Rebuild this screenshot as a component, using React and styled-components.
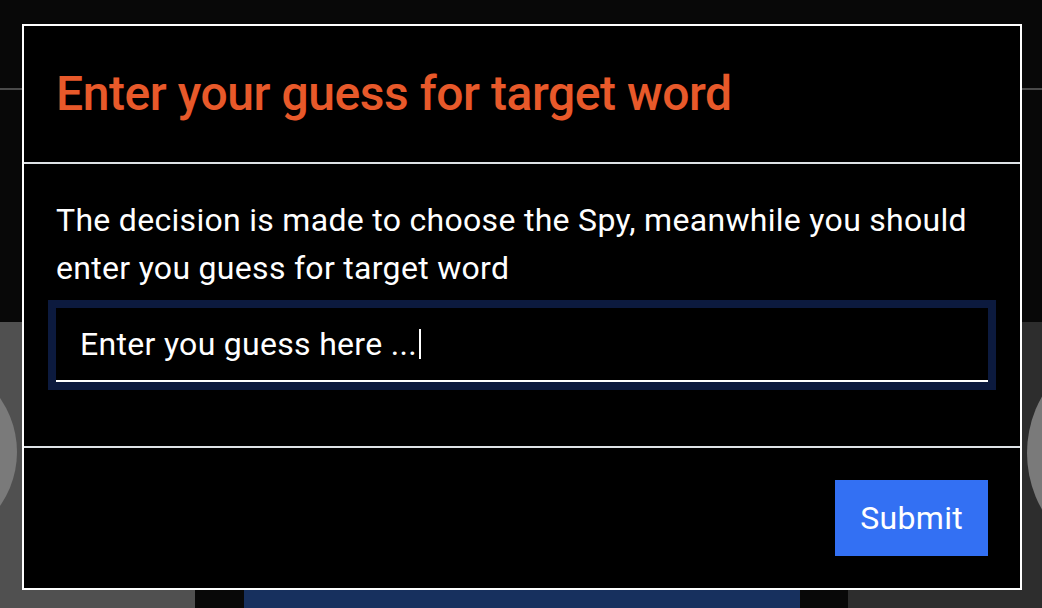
import React from 'react';
import styled, { createGlobalStyle } from 'styled-components';

const GlobalStyle = createGlobalStyle`
  html, body {
    margin: 0;
    padding: 0;
    background: #080808;
    font-family: Roboto, "Noto Sans", "Liberation Sans", sans-serif;
  }
  * { box-sizing: border-box; }
`;

// the game page sitting behind the modal
const Page = styled.div`
  height: 100vh;
  display: flex;
  flex-direction: column;
  overflow: hidden;
`;

const TopBar = styled.div`
  flex: 0 0 90px;
  border-bottom: 2px solid #4a4a4a;
`;

const Stage = styled.div`
  flex: 0 0 232px;
`;

const CardRow = styled.div`
  flex: 1;
  display: flex;
`;

const PlayerCard = styled.div`
  flex: 0 0 ${p => p.width}px;
  background: ${p => p.bg};
  overflow: hidden;
`;

const Avatar = styled.div`
  width: ${p => p.size}px;
  height: ${p => p.size}px;
  border-radius: 50%;
  background: #7a7a7a;
  margin-top: ${p => p.top}px;
  margin-left: ${p => p.left}px;
`;

const Center = styled.div`
  flex: 0 0 556px;
  margin: 0 48px 0 49px;
  display: flex;
  flex-direction: column;
  justify-content: flex-end;
`;

const VoteButton = styled.div`
  height: 60px;
  margin-bottom: -30px;
  background: #17305e;
`;

// modal
const Backdrop = styled.div`
  position: fixed;
  inset: 0;
`;

const Modal = styled.div`
  position: absolute;
  top: 24px;
  left: 22px;
  width: 1000px;
  height: 566px;
  border: 2px solid #fff;
  background: #000;
  display: flex;
  flex-direction: column;
  color: #fff;
`;

const Header = styled.div`
  flex: 0 0 138px;
  padding: 0 32px;
  display: flex;
  align-items: center;
  border-bottom: 2px solid #dee2e6;
`;

const Title = styled.h5`
  margin: 0;
  font-size: 48px;
  font-weight: 500;
  line-height: 1.2;
  letter-spacing: -0.45px;
  color: #e8592a;
`;

const Body = styled.div`
  flex: 1;
  padding: 32px;
`;

const Text = styled.p`
  margin: 0 0 16px;
  font-size: 32px;
  line-height: 48px;
  letter-spacing: 0.3px;
`;

const InputWrap = styled.label`
  display: flex;
  align-items: center;
  height: 74px;
  padding: 0 24px;
  border-bottom: 2px solid #fff;
  background: #000;
  box-shadow: 0 0 0 8px #0c1a3e;
`;

const GuessInput = styled.input`
  field-sizing: content;
  min-width: 0;
  padding: 0;
  border: none;
  background: transparent;
  color: #fff;
  font-family: inherit;
  font-size: 32px;
  letter-spacing: 0.3px;
  outline: none;
  caret-color: transparent;
`;

const Caret = styled.span`
  width: 2px;
  height: 30px;
  margin-left: 2px;
  background: #fff;
`;

const Footer = styled.div`
  flex: 0 0 140px;
  padding: 32px;
  display: flex;
  justify-content: flex-end;
  align-items: flex-start;
  border-top: 2px solid #dee2e6;
`;

const SubmitButton = styled.button`
  height: 76px;
  padding: 0 25px;
  border: none;
  background: #3370f3;
  color: #fff;
  font-family: inherit;
  font-size: 32px;
  line-height: 48px;
  letter-spacing: 0.3px;
  cursor: pointer;
`;

const App = () => {
  return (
    <>
      <GlobalStyle />
      <Page>
        <TopBar />
        <Stage />
        <CardRow>
          <PlayerCard width={195} bg="#505050">
            <Avatar size={188} top={36} left={-171} />
          </PlayerCard>
          <Center>
            <VoteButton />
          </Center>
          <PlayerCard width={200} bg="#2d2d2d">
            <Avatar size={228} top={17} left={179} />
          </PlayerCard>
        </CardRow>
      </Page>
      <Backdrop>
        <Modal>
          <Header>
            <Title>Enter your guess for target word</Title>
          </Header>
          <Body>
            <Text>
              The decision is made to choose the Spy, meanwhile you should
              enter you guess for target word
            </Text>
            <InputWrap>
              <GuessInput defaultValue="Enter you guess here ..." />
              <Caret />
            </InputWrap>
          </Body>
          <Footer>
            <SubmitButton>Submit</SubmitButton>
          </Footer>
        </Modal>
      </Backdrop>
    </>
  );
};

export default App;
